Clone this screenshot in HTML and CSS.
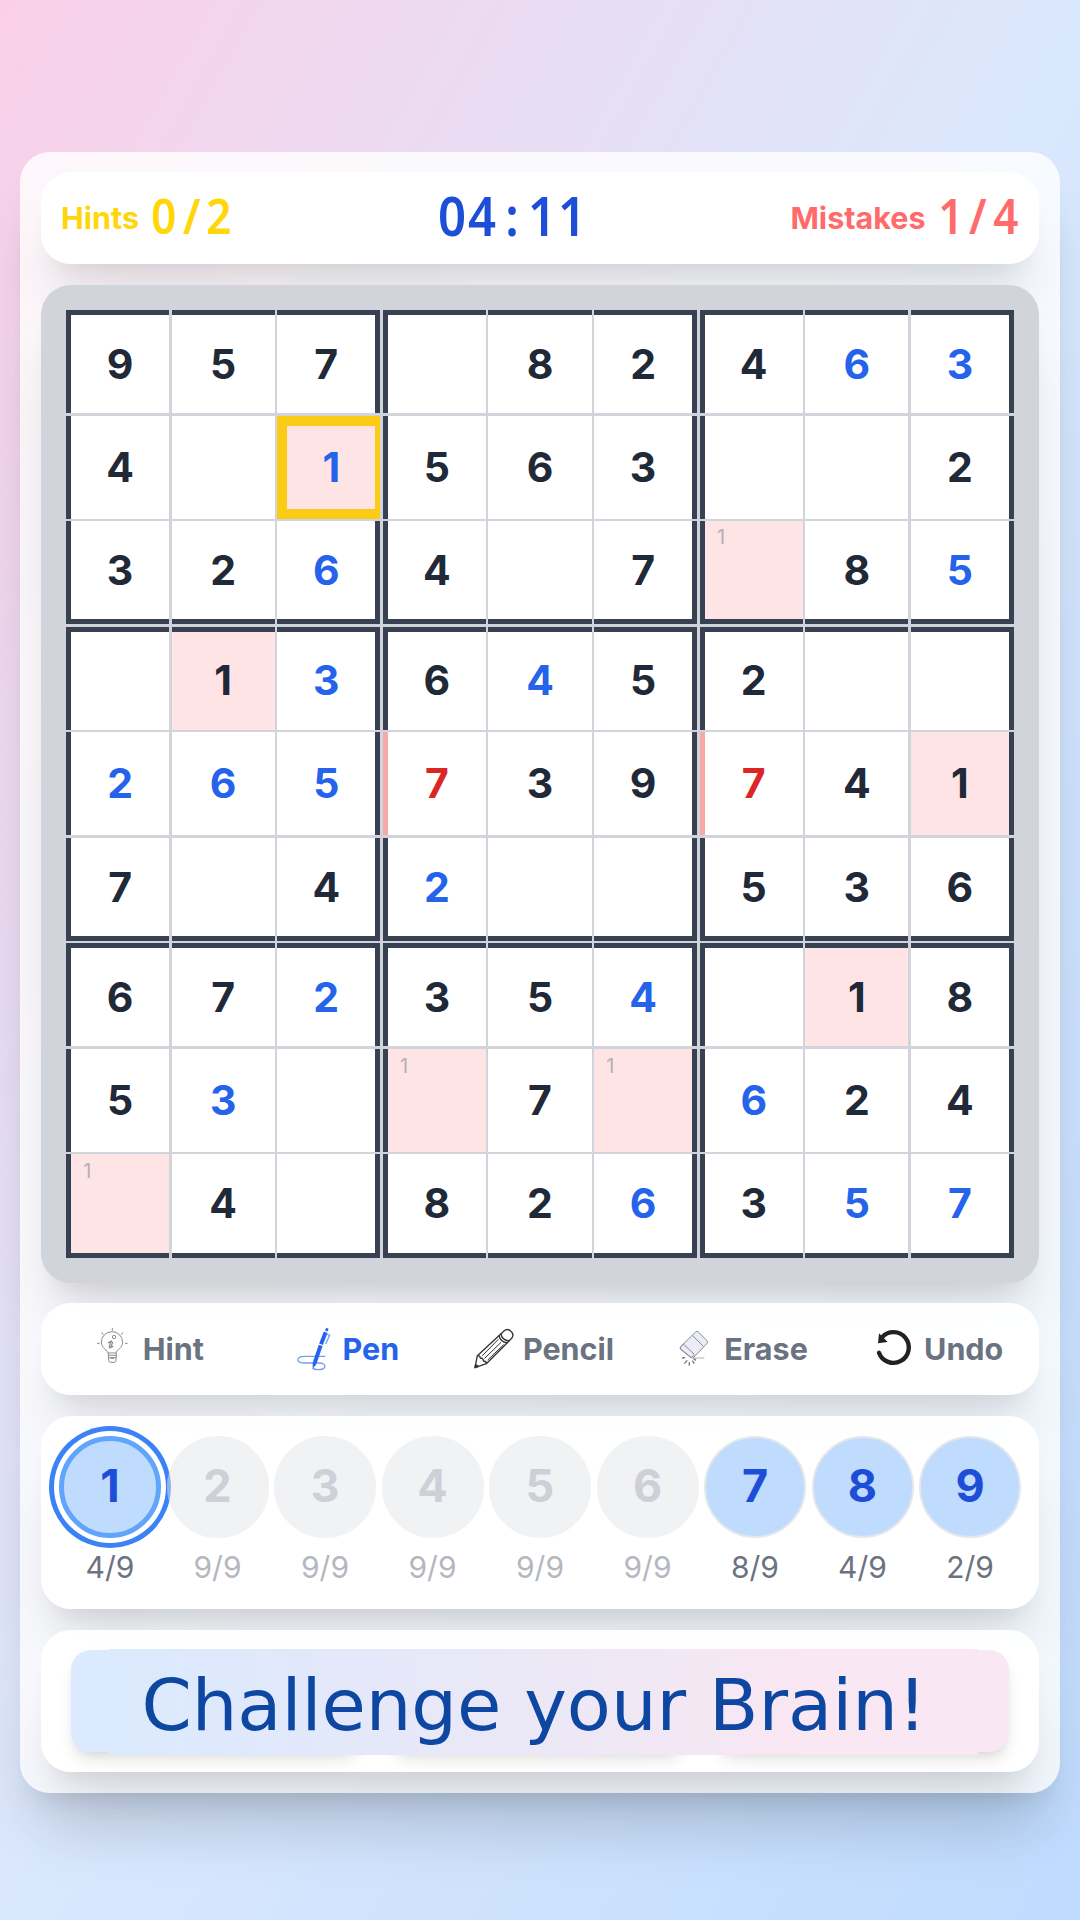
FILE: index.html
```html
<!DOCTYPE html>
<html lang="en">
<head>
  <meta charset="UTF-8" />
  <meta name="viewport" content="width=device-width, initial-scale=1.0" />
  <title>Sudoku</title>
  <link rel="stylesheet" href="styles.css">
</head>
<body>
  <main class="app">
    <header class="card status">
      <div class="stat hints">Hints <span class="mono"><i>0</i><i>/</i><i>2</i></span></div>
      <div class="timer mono"><i>0</i><i>4</i><i>:</i><i>1</i><i>1</i></div>
      <div class="stat mistakes">Mistakes <span class="mono"><i>1</i><i>/</i><i>4</i></span></div>
    </header>

    <section class="board">
      <div class="grid" id="grid"></div>
    </section>

    <nav class="card tools">
      <button class="tool">
        <svg viewBox="0 0 150 150" fill="none" stroke="#8b8b8b" stroke-width="3">
          <path d="M66 90c0-8-20-14-20-32a32 32 0 0 1 64 0c0 18-20 24-20 32zM67 90v14h24V90M67 97h24M68 104v8q0 6 6 6h10q6 0 6-6v-8M73 106h11"/>
          <path d="M79 15v8M33 61h8M117 61h8M47 28l5 7M111 28l-5 7"/>
          <path d="M66 60l9-5-5 16q-1 6 6 2l6-4M70 59q12-5 9 2l-5 12" stroke-width="3.5"/>
          <circle cx="84" cy="42" r="5"/>
        </svg>
        Hint
      </button>
      <button class="tool active">
        <svg viewBox="0 0 150 150" fill="none" stroke="#2563eb">
          <path d="M118 100H58C28 100 28 120 58 120H98C124 120 122 140 96 140Q84 140 80 135" stroke="#7b9cec" stroke-width="4"/>
          <path d="M104 67L86 120" stroke-width="12"/>
          <path d="M119 28L105 64" stroke-width="12"/>
          <path d="M80 118l12 4-12 15z" fill="#2563eb" stroke="none"/>
          <path d="M121 24l3-8" stroke-width="8"/>
          <path d="M122 33l9 4-12 26" stroke="#7b9cec" stroke-width="4"/>
        </svg>
        Pen
      </button>
      <button class="tool">
        <svg viewBox="0 0 150 150" fill="none" stroke="#333" stroke-width="4" stroke-linejoin="round">
          <path d="M27 134L34 98L114 24Q124 15 134 24Q146 34 137 46L61 122Z"/>
          <path d="M34 98q8-1 9 7 10 1 9 9 9 0 9 8M105 32q2 20 25 22M99 37q4 20 25 23"/>
          <path d="M49 98L97 49M56 106L105 58M65 111L113 65" stroke-width="3"/>
          <path d="M27 134l2-9 8 5z" fill="#333"/>
        </svg>
        Pencil
      </button>
      <button class="tool">
        <svg viewBox="0 0 150 150" fill="none" stroke="#8a8a90" stroke-width="3" stroke-linejoin="round">
          <path d="M86 27q4-4 8 0l26 26q4 4 0 8L80 103q-4 4-8 0L42 79q-4-4-1-8z" fill="#ececf6"/>
          <path d="M41 71l8-8 33 31-8 9q-2 2-5-1L41 79q-3-4 0-8zM76 37l33 33" fill="none"/>
          <path d="M78 105h34" stroke-width="2"/>
          <path d="M45 105l10-1M52 122l9-10M67 118v10M76 113l6 9M80 107l7 5" stroke="#777" stroke-width="4"/>
        </svg>
        Erase
      </button>
      <button class="tool">
        <svg viewBox="0 0 150 150" fill="none" stroke="#222" stroke-width="13">
          <path d="M45 43A46 46 0 1 1 36 89" stroke-linecap="round"/>
          <path d="M36 31L33 61L62 57Z" fill="#222" stroke="none"/>
        </svg>
        Undo
      </button>
    </nav>

    <section class="card pad">
      <div class="num selected"><b>1</b><span>4/9</span></div>
      <div class="num done"><b>2</b><span>9/9</span></div>
      <div class="num done"><b>3</b><span>9/9</span></div>
      <div class="num done"><b>4</b><span>9/9</span></div>
      <div class="num done"><b>5</b><span>9/9</span></div>
      <div class="num done"><b>6</b><span>9/9</span></div>
      <div class="num"><b>7</b><span>8/9</span></div>
      <div class="num"><b>8</b><span>4/9</span></div>
      <div class="num"><b>9</b><span>2/9</span></div>
    </section>

    <footer class="card actions">
      <div class="action first"></div>
      <div class="action middle"></div>
      <div class="action last"></div>
      <p class="banner">Challenge your Brain!</p>
    </footer>
  </main>

  <script>
// . = empty, b = filled in by the player, r = wrong, h = highlighted, s = selected, n = pencil note
const rows = [
  "9 5 7 . 8 2 4 6b 3b",
  "4 . 1bhs 5 6 3 . . 2",
  "3 2 6b 4 . 7 1nh 8 5b",
  ". 1h 3b 6 4b 5 2 . .",
  "2b 6b 5b 7r 3 9 7r 4 1h",
  "7 . 4 2b . . 5 3 6",
  "6 7 2b 3 5 4b . 1h 8",
  "5 3b . 1nh 7 1nh 6b 2 4",
  "1nh 4 . 8 2 6b 3 5b 7b"
];
const names = { b: "player", r: "wrong", h: "same", s: "current", n: "note" };
const grid = document.getElementById("grid");

rows.forEach((row, y) => {
  row.split(" ").forEach((item, x) => {
    const cell = document.createElement("div");
    cell.className = "cell";
    if (x % 3 === 0) cell.classList.add("left");
    if (x % 3 === 2) cell.classList.add("right");
    if (y % 3 === 0) cell.classList.add("top");
    if (y % 3 === 2) cell.classList.add("bottom");
    item.slice(1).split("").forEach(f => cell.classList.add(names[f]));
    if (item[0] !== ".") cell.innerHTML = `<span>${item[0]}</span>`;
    grid.appendChild(cell);
  });
});
  </script>
</body>
</html>
```

FILE: styles.css
```css
* {
  margin: 0;
  padding: 0;
  box-sizing: border-box;
}

body {
  height: 1920px;
  overflow: hidden;
  background: linear-gradient(to bottom right, #fad0e8, #dae8fd, #bfdbfe);
  font-family: Inter, sans-serif;
  display: flex;
  justify-content: center;
  align-items: flex-start;
}

.app {
  width: 1040px;
  margin-top: 152px;
  padding: 20px 21px 21px;
  border-radius: 30px;
  background: rgba(255, 255, 255, 0.8);
  display: flex;
  flex-direction: column;
  gap: 21px;
}

.app,
.card,
.board {
  box-shadow: 0 50px 62.5px -12.5px rgba(0,0,0,0.1), 0 20px 25px -15px rgba(0,0,0,0.1);
}

.card {
  background: rgba(255, 255, 255, 0.95);
  border-radius: 30px;
}

/* Status bar */
.status {
  height: 92px;
  padding: 0 20px 2px;
  display: flex;
  justify-content: space-between;
  align-items: center;
}

.stat {
  display: flex;
  align-items: center;
  gap: 11px;
  font-size: 30.5px;
  font-weight: 700;
}

.hints {
  color: #ffd60a;
}

.mistakes {
  color: #ff6b6b;
}

.mono {
  display: flex;
  padding-bottom: 4px;
  font-family: "Noto Sans", sans-serif;
  font-size: 49px;
  font-weight: 600;
  line-height: 1;
}

.mono i {
  width: 27.5px;
  display: flex;
  justify-content: center;
  font-style: normal;
  transform: scaleX(0.9);
}

.timer {
  font-size: 54.5px;
  color: #1d4ed8;
}

.timer i {
  width: 30px;
}

/* Board */
.board {
  height: 997.5px;
  margin-bottom: -0.75px;
  padding: 25px;
  border-radius: 30px;
  background: #d1d5db;
}

.grid {
  width: 948px;
  height: 947.5px;
  display: grid;
  grid-template-columns: repeat(9, 1fr);
  grid-template-rows: repeat(9, 1fr);
  gap: 2.5px;
}

.cell {
  min-width: 0;
  min-height: 0;
  padding-bottom: 0.5px;
  display: flex;
  justify-content: center;
  align-items: center;
  background: white;
  border: 0 solid #374151;
  color: #1f2937;
  font-size: 41px;
  font-weight: 700;
}

.left { border-left-width: 5px; }
.right { border-right-width: 5px; }
.top { border-top-width: 5px; }
.bottom { border-bottom-width: 5px; }

.player { color: #2563eb; }
.same { background: #fee4e5; }

.wrong {
  color: #dc2626;
  border-color: #f9a8a8;
}

.current {
  border: 10px solid #facc15;
  border-right-width: 5px;
}

.note {
  display: grid;
  grid-template-columns: repeat(3, 1fr);
  grid-template-rows: repeat(3, 1fr);
  justify-items: center;
  font-size: 20px;
  font-weight: 400;
  color: #b5afb7;
}

/* Tools */
.tools {
  height: 92px;
  padding: 0 5px 1px;
  display: grid;
  grid-template-columns: repeat(5, 1fr);
}

.tool {
  display: flex;
  justify-content: center;
  align-items: center;
  gap: 7px;
  border: none;
  background: none;
  font-family: inherit;
  font-size: 30.5px;
  font-weight: 700;
  color: #6b7280;
}

.tool svg {
  width: 50px;
  height: 50px;
}

.tool.active {
  color: #2563eb;
}

/* Number pad */
.pad {
  height: 193px;
  padding: 20px 18px;
  display: flex;
  justify-content: space-between;
}

.num {
  width: 102px;
  display: flex;
  flex-direction: column;
  align-items: center;
  color: #6b7280;
  font-size: 30px;
}

.num b {
  width: 102px;
  height: 102px;
  margin-bottom: 9px;
  padding-bottom: 3px;
  display: flex;
  justify-content: center;
  align-items: center;
  border-radius: 50%;
  border: 2.5px solid #e5e7eb;
  background: #bfdbfe;
  color: #1d4ed8;
  font-size: 45px;
}

.num span {
  line-height: 40px;
}

.selected b {
  border: 5px solid #60a5fa;
  box-shadow: 0 0 0 5px white, 0 0 0 10px #3b82f6;
}

.done {
  opacity: 0.5;
}

.done b {
  background: #e5e7eb;
  color: #9ca3af;
}

/* Bottom banner */
.actions {
  position: relative;
  height: 142px;
  padding: 20px 30px;
  display: flex;
  gap: 30px;
}

.action {
  border-radius: 20px;
  box-shadow: 0 10px 15px -2.5px rgba(0,0,0,0.1), 0 5px 10px -5px rgba(0,0,0,0.1);
}

.first {
  width: 290px;
  background: #dbeafe;
}

.middle {
  width: 295px;
}

.last {
  width: 293px;
  background: #f9e7f3;
}

.banner {
  position: absolute;
  left: 68px;
  top: 19px;
  width: 869px;
  height: 106px;
  padding-right: 19px;
  line-height: 113px;
  background: linear-gradient(to right, #dbeafe, #e3e8fb 25%, #ece8f6 50%, #f9e7f3 80%);
  color: #0d47a1;
  font-family: "DejaVu Sans", sans-serif;
  font-size: 72px;
  text-align: center;
  white-space: nowrap;
}
```
